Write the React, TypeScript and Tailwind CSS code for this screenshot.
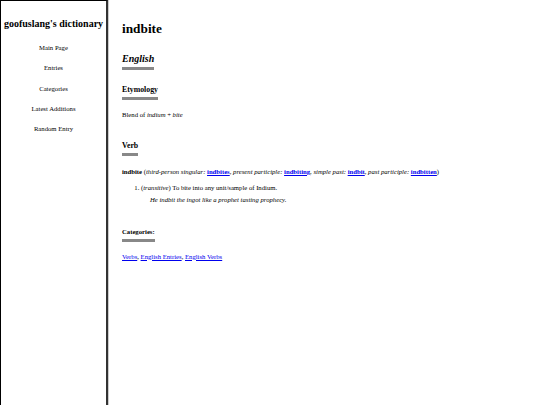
import React from 'react';

const serif = "font-['Liberation_Serif','Times_New_Roman',serif]";

const navLinks = ['Main Page', 'Entries', 'Categories', 'Latest Additions', 'Random Entry'];

function Heading({ children, className }: { children: React.ReactNode; className: string }) {
  return (
    <div className={`inline-block border-b-[3px] border-[#888] font-bold leading-none pb-[3px] text-black ${className}`}>
      {children}
    </div>
  );
}

function Sidebar() {
  return (
    <aside className="w-[108px] shrink-0 h-full border-l border-t border-black border-r-2 border-r-[#333] shadow-[1px_0_0_#ccc] bg-white">
      <div className="text-center text-[10px] font-bold text-black mt-[18px] leading-none">goofuslang's dictionary</div>
      <nav className="flex flex-col items-center mt-[15px] gap-[12px]">
        {navLinks.map((l) => (
          <a key={l} className="text-[6.7px] leading-[8.3px] text-black">
            {l}
          </a>
        ))}
      </nav>
    </aside>
  );
}

function Link({ children }: { children: React.ReactNode }) {
  return <a className="text-[#0000ee] underline">{children}</a>;
}

export default function App() {
  return (
    <div className={`flex h-screen bg-white ${serif}`}>
      <Sidebar />
      <main className="flex-1 pl-[14px] text-[6.7px] leading-[8px] text-black">
        <h1 className="text-[13.3px] font-bold leading-none mt-[22px]">indbite</h1>

        <div className="mt-[19px]">
          <Heading className="text-[10px] italic">English</Heading>
        </div>

        <div className="mt-[16px]">
          <Heading className="text-[7.8px]">Etymology</Heading>
        </div>

        <p className="mt-[11px]">
          Blend of <i>indium</i> + <i>bite</i>
        </p>

        <div className="mt-[23px]">
          <Heading className="text-[7.8px]">Verb</Heading>
        </div>

        <p className="mt-[12px]">
          <b>indbite</b> (<i>third-person singular:</i> <b><Link>indbites</Link></b>, <i>present participle:</i>{' '}
          <b><Link>indbiting</Link></b>, <i>simple past:</i> <b><Link>indbit</Link></b>, <i>past participle:</i>{' '}
          <b><Link>indbitten</Link></b>)
        </p>

        <ol className="mt-[8px] pl-[19px] list-decimal">
          <li>
            (<i>transitive</i>) To bite into any unit/sample of Indium.
            <p className="mt-[4px] pl-[9px] italic">He indbit the ingot like a prophet tasting prophecy.</p>
          </li>
        </ol>

        <div className="mt-[24px]">
          <Heading className="text-[6.7px]">Categories:</Heading>
        </div>

        <p className="mt-[11px]">
          <Link>Verbs</Link>, <Link>English Entries</Link>, <Link>English Verbs</Link>
        </p>
      </main>
    </div>
  );
}
